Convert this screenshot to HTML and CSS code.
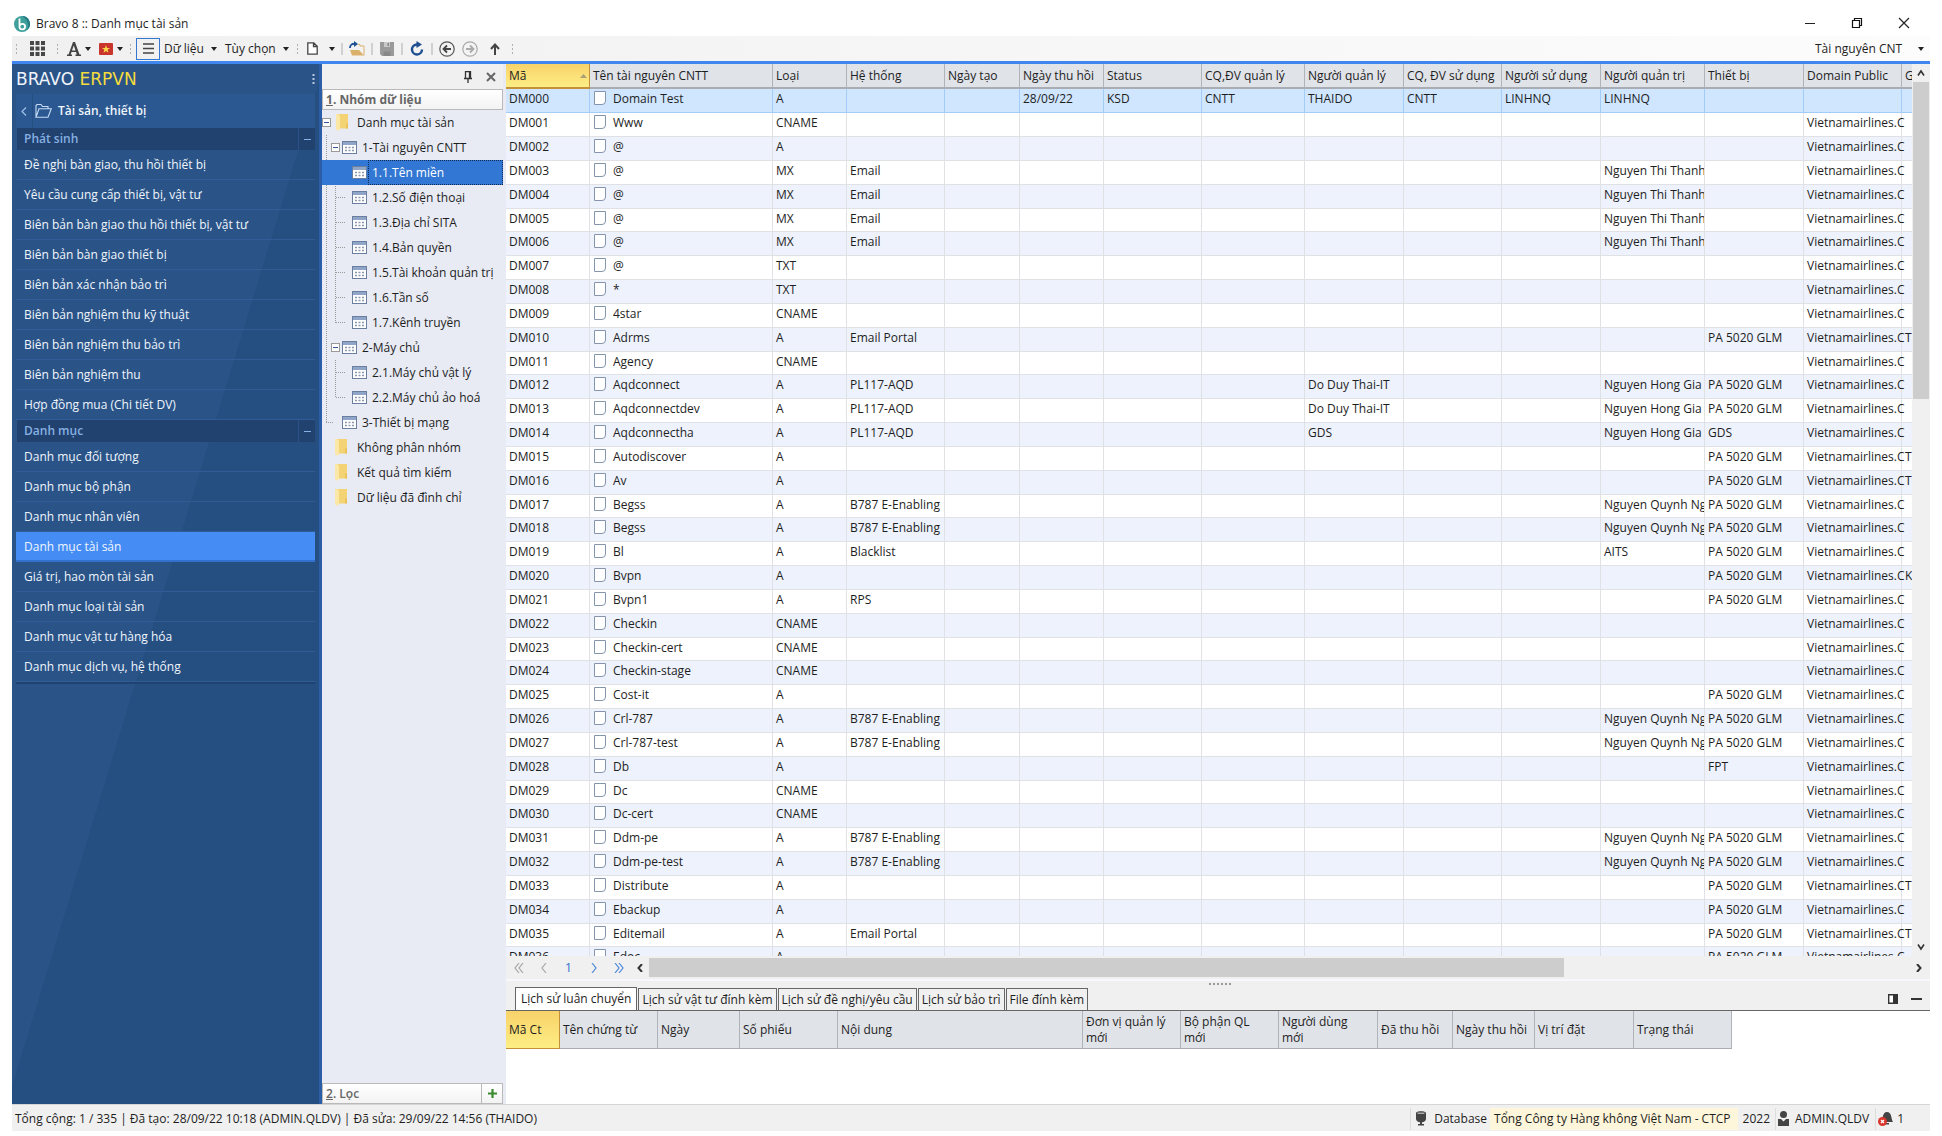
FILE: index.html
```html
<!DOCTYPE html>
<html lang="vi">
<head>
<meta charset="utf-8">
<title>Bravo 8 :: Danh mục tài sản</title>
<link rel="stylesheet" href="styles.css">
</head>
<body>
<svg class="sprite" aria-hidden="true">
  <symbol id="cal" viewBox="0 0 15 13"><rect x=".5" y=".5" width="14" height="12" fill="#fff" stroke="#6a7f9f"/><rect x="1" y="1" width="13" height="3" fill="#8fa6c9"/><path d="M3 6.500h2m1.500 0h2m1.500 0h2M3 9.500h2m1.500 0h2m1.500 0h2" stroke="#8a97ac" stroke-width="1.500"/></symbol>
  <symbol id="folder" viewBox="0 0 13 17"><path d="M2 0h10v14.500H2z" fill="#f3d373"/><path d="M0 0h2.500l1.500 2v13l-1.500 2L0 15z" fill="#fbe7a6"/><path d="M10 9.500h2v5h-2z" fill="#e9c25a"/></symbol>
  <symbol id="caret" viewBox="0 0 6 4"><path d="M0 0h6L3 4z" fill="#222"/></symbol>
</svg>
<div class="window">
  <header class="titlebar">
    <svg class="app-logo" width="16" height="16" viewBox="0 0 16 16"><circle cx="8" cy="8" r="8" fill="#3f9f9b"/><path d="M8 0a8 8 0 0 1 5 14.200C16 9 13 3 8 0z" fill="#267c86"/><path d="M5.500 2.500v8.200a2.800 2.800 0 1 0 2.800-2.900c-1.500 0-2.800 1-2.800 2.600" fill="none" stroke="#fff" stroke-width="1.800"/></svg>
    <h1 class="app-title">Bravo 8 :: Danh mục tài sản</h1>
    <button class="win-btn" aria-label="Thu nhỏ"><svg width="12" height="12"><path d="M1 6.500h10" stroke="#222"/></svg></button>
    <button class="win-btn" aria-label="Khôi phục"><svg width="12" height="12"><path d="M1.500 3.500h7v7h-7zM3.500 3.500v-2h7v7h-2" fill="none" stroke="#111" stroke-width="1.200"/></svg></button>
    <button class="win-btn" aria-label="Đóng"><svg width="12" height="12"><path d="M1 1l10 10M11 1L1 11" stroke="#222" stroke-width="1.200"/></svg></button>
  </header>

  <div class="toolbar" role="toolbar">
    <span class="grip"></span>
    <button class="tool w32" aria-label="Ứng dụng"><svg width="15" height="15"><path d="M0 2h15M0 7.500h15M0 13h15" stroke="#484848" stroke-width="4" stroke-dasharray="4 1.500"/></svg></button>
    <span class="grip"></span>
    <button class="tool w34" aria-label="Phông chữ"><svg width="14" height="14"><path d="M6 0h2l4.500 12.500H14V14H8.500v-1.500h1.300L9 10H4.500l-.8 2.500H5V14H0v-1.500h1.500zM5 8.500h3.500L6.800 3.500z" fill="#444"/></svg><svg class="caret"><use href="#caret"/></svg></button>
    <button class="tool w30" aria-label="Ngôn ngữ"><svg width="14" height="12"><rect width="14" height="12" rx="1" fill="#c9342c"/><path d="M7 2l1 3h3L8.600 6.800l.9 3L7 8 4.500 9.800l.9-3L3 5h3z" fill="#fbd84a"/></svg><svg class="caret"><use href="#caret"/></svg></button>
    <span class="grip"></span>
    <button class="tool boxed" aria-label="Danh sách"><svg width="11" height="11"><path d="M0 1h11M0 5.500h11M0 10h11" stroke="#444" stroke-width="1.600"/></svg></button>
    <button class="tool text">Dữ liệu<svg class="caret"><use href="#caret"/></svg></button>
    <button class="tool text">Tùy chọn<svg class="caret"><use href="#caret"/></svg></button>
    <span class="grip"></span>
    <button class="tool new" aria-label="Thêm mới"><svg width="11" height="13"><path d="M.8.8h6l3.400 3.400v8H.8zM6.500 1v3.500H10" fill="#fff" stroke="#444" stroke-width="1.300"/></svg><svg class="caret"><use href="#caret"/></svg></button>
    <span class="sep"></span>
    <button class="tool w26" aria-label="Mở"><svg width="16" height="15"><path d="M9 3.500h2V5h4v9.500" fill="none" stroke="#d9b06f"/><path d="M1 9h9l5 5.500H3z" fill="#dbb06a"/><path d="M1 7C1 4 3 2.500 6 2.800" fill="none" stroke="#1d4f91" stroke-width="1.800"/><path d="M5 0l4 3-4 3z" fill="#1d4f91"/></svg></button>
    <span class="sep"></span>
    <button class="tool w26" aria-label="Lưu"><svg width="14" height="14"><path d="M0 0h14v14H2l-2-2z" fill="#9a9a9a"/><path d="M4 0h6v5H4z" fill="#c9c9c9"/><path d="M7.500 1h1.500v3H7.500zM3.500 14V9.500h7V14" fill="#888"/></svg></button>
    <span class="sep"></span>
    <button class="tool w26" aria-label="Làm mới"><svg width="14" height="15"><path d="M8 3.500H6.500a5 5 0 1 0 5.500 5" fill="none" stroke="#1d4f91" stroke-width="2.400"/><path d="M6.500 0l5.500 3.500L6.500 7z" fill="#1d4f91"/></svg></button>
    <span class="sep"></span>
    <button class="tool w24 history" aria-label="Quay lại"><svg width="16" height="16"><circle cx="8" cy="8" r="7.200" fill="none" stroke="#555" stroke-width="1.200"/><path d="M12 8H5M8 4.500L4.500 8 8 11.500" fill="none" stroke="#444" stroke-width="1.800"/></svg></button>
    <button class="tool w24" aria-label="Tiếp"><svg width="16" height="16"><circle cx="8" cy="8" r="7.200" fill="none" stroke="#aaa" stroke-width="1.200"/><path d="M4 8h7M8 4.500L11.500 8 8 11.500" fill="none" stroke="#aaa" stroke-width="1.800"/></svg></button>
    <button class="tool w26" aria-label="Lên"><svg width="10" height="12"><path d="M5 12V2M1 6l4-4.500L9 6" fill="none" stroke="#444" stroke-width="2"/></svg></button>
    <span class="grip"></span>
    <label class="view-picker"><select aria-label="Kiểu xem"><option>Tài nguyên CNT</option></select><svg class="caret"><use href="#caret"/></svg></label>
  </div>

  <div class="main">
    <nav class="sidebar">
      <div class="brand"><span>BRAVO <b>ERPVN</b></span><button class="kebab" aria-label="Thêm"><svg width="3" height="11"><path d="M1.500 0v11" stroke="#b9cbe4" stroke-width="2" stroke-dasharray="2 2"/></svg></button></div>
      <div class="module"><button class="back" aria-label="Trở về"><svg width="6" height="9"><path d="M5 .5L1 4.500l4 4" fill="none" stroke="#9fc0ea" stroke-width="1.200"/></svg></button><svg class="module-icon" width="17" height="14"><path d="M1 12.500V1.500l1-1h4l1.500 2H13v2M1 13.200L4 4.700h12.300L13 13.200z" fill="none" stroke="#c6daf5" stroke-width="1.100"/></svg><strong>Tài sản, thiết bị</strong></div>
      <h2 class="section"><span>Phát sinh</span><button aria-label="Thu gọn Phát sinh"></button></h2>
      <ul class="menu">
        <li><a href="#">Đề nghị bàn giao, thu hồi thiết bị</a></li>
        <li><a href="#">Yêu cầu cung cấp thiết bị, vật tư</a></li>
        <li><a href="#">Biên bản bàn giao thu hồi thiết bị, vật tư</a></li>
        <li><a href="#">Biên bản bàn giao thiết bị</a></li>
        <li><a href="#">Biên bản xác nhận bảo trì</a></li>
        <li><a href="#">Biên bản nghiệm thu kỹ thuật</a></li>
        <li><a href="#">Biên bản nghiệm thu bảo trì</a></li>
        <li><a href="#">Biên bản nghiệm thu</a></li>
        <li><a href="#">Hợp đồng mua (Chi tiết DV)</a></li>
      </ul>
      <h2 class="section"><span>Danh mục</span><button aria-label="Thu gọn Danh mục"></button></h2>
      <ul class="menu last">
        <li><a href="#">Danh mục đối tượng</a></li>
        <li><a href="#">Danh mục bộ phận</a></li>
        <li><a href="#">Danh mục nhân viên</a></li>
        <li><a href="#" class="active">Danh mục tài sản</a></li>
        <li><a href="#">Giá trị, hao mòn tài sản</a></li>
        <li><a href="#">Danh mục loại tài sản</a></li>
        <li><a href="#">Danh mục vật tư hàng hóa</a></li>
        <li><a href="#">Danh mục dịch vụ, hệ thống</a></li>
      </ul>
    </nav>

    <aside class="groups">
      <div class="pane-tools">
        <button aria-label="Ghim"><svg width="8" height="12"><path d="M1.500 7V.7h5V7M0 7.500h8M4 7.500V12M5.500 1v6" fill="none" stroke="#333" stroke-width="1.300"/></svg></button>
        <button aria-label="Đóng khung"><svg width="10" height="10"><path d="M1 1l8 8M9 1L1 9" stroke="#666" stroke-width="2"/></svg></button>
      </div>
      <h2 class="pane-head"><span><u>1</u>. Nhóm dữ liệu</span></h2>
      <ul class="tree">
        <li><div class="node root"><button class="toggle" aria-label="Thu gọn"></button><svg class="folder"><use href="#folder"/></svg><span>Danh mục tài sản</span></div>
          <ul class="level1">
            <li><div class="node"><button class="toggle" aria-label="Thu gọn"></button><svg class="cal"><use href="#cal"/></svg><span>1-Tài nguyên CNTT</span></div>
              <ul class="level2">
                <li class="node selected"><svg class="cal"><use href="#cal"/></svg><span>1.1.Tên miền</span></li>
                <li class="node"><svg class="cal"><use href="#cal"/></svg><span>1.2.Số điện thoại</span></li>
                <li class="node"><svg class="cal"><use href="#cal"/></svg><span>1.3.Địa chỉ SITA</span></li>
                <li class="node"><svg class="cal"><use href="#cal"/></svg><span>1.4.Bản quyền</span></li>
                <li class="node"><svg class="cal"><use href="#cal"/></svg><span>1.5.Tài khoản quản trị</span></li>
                <li class="node"><svg class="cal"><use href="#cal"/></svg><span>1.6.Tần số</span></li>
                <li class="node"><svg class="cal"><use href="#cal"/></svg><span>1.7.Kênh truyền</span></li>
              </ul></li>
            <li><div class="node"><button class="toggle" aria-label="Thu gọn"></button><svg class="cal"><use href="#cal"/></svg><span>2-Máy chủ</span></div>
              <ul class="level2">
                <li class="node"><svg class="cal"><use href="#cal"/></svg><span>2.1.Máy chủ vật lý</span></li>
                <li class="node"><svg class="cal"><use href="#cal"/></svg><span>2.2.Máy chủ ảo hoá</span></li>
              </ul></li>
            <li><div class="node leaf"><svg class="cal"><use href="#cal"/></svg><span>3-Thiết bị mạng</span></div></li>
          </ul></li>
        <li class="node plain"><svg class="folder"><use href="#folder"/></svg><span>Không phân nhóm</span></li>
        <li class="node plain"><svg class="folder"><use href="#folder"/></svg><span>Kết quả tìm kiếm</span></li>
        <li class="node plain"><svg class="folder"><use href="#folder"/></svg><span>Dữ liệu đã đình chỉ</span></li>
      </ul>
      <h2 class="pane-head filter"><span><u>2</u>. Lọc</span><button aria-label="Thêm bộ lọc"><svg width="9" height="9"><path d="M4.500 0v9M0 4.500h9" stroke="#3c8a2e" stroke-width="2.200"/></svg></button></h2>
    </aside>

    <section class="content">
      <div class="grid-area">
        <div class="grid-view">
          <table class="grid">
            <colgroup><col class="c84"><col class="c183"><col class="c74"><col class="c98"><col class="c75"><col class="c84"><col class="c98"><col class="c103"><col class="c99"><col class="c98"><col class="c99"><col class="c104"><col class="c99"><col class="c98"><col class="c98"></colgroup>
            <thead><tr><th class="sorted"><div>Mã<svg width="7" height="4"><path d="M0 4h7L3.500 0z" fill="#a8a078"/></svg></div><th>Tên tài nguyên CNTT<th>Loại<th>Hệ thống<th>Ngày tạo<th>Ngày thu hồi<th>Status<th>CQ,ĐV quản lý<th>Người quản lý<th>CQ, ĐV sử dụng<th>Người sử dụng<th>Người quản trị<th>Thiết bị<th>Domain Public<th>G</thead>
            <tbody>
<tr class="current"><td>DM000<td>Domain Test<td>A<td><td><td>28/09/22<td>KSD<td>CNTT<td>THAIDO<td>CNTT<td>LINHNQ<td>LINHNQ<td><td><td>
<tr><td>DM001<td>Www<td>CNAME<td><td><td><td><td><td><td><td><td><td><td>Vietnamairlines.C<td>
<tr><td>DM002<td>@<td>A<td><td><td><td><td><td><td><td><td><td><td>Vietnamairlines.C<td>
<tr><td>DM003<td>@<td>MX<td>Email<td><td><td><td><td><td><td><td>Nguyen Thi Thanh<td><td>Vietnamairlines.C<td>
<tr><td>DM004<td>@<td>MX<td>Email<td><td><td><td><td><td><td><td>Nguyen Thi Thanh<td><td>Vietnamairlines.C<td>
<tr><td>DM005<td>@<td>MX<td>Email<td><td><td><td><td><td><td><td>Nguyen Thi Thanh<td><td>Vietnamairlines.C<td>
<tr><td>DM006<td>@<td>MX<td>Email<td><td><td><td><td><td><td><td>Nguyen Thi Thanh<td><td>Vietnamairlines.C<td>
<tr><td>DM007<td>@<td>TXT<td><td><td><td><td><td><td><td><td><td><td>Vietnamairlines.C<td>
<tr><td>DM008<td>*<td>TXT<td><td><td><td><td><td><td><td><td><td><td>Vietnamairlines.C<td>
<tr><td>DM009<td>4star<td>CNAME<td><td><td><td><td><td><td><td><td><td><td>Vietnamairlines.C<td>
<tr><td>DM010<td>Adrms<td>A<td>Email Portal<td><td><td><td><td><td><td><td><td>PA 5020 GLM<td>Vietnamairlines.C<td>T
<tr><td>DM011<td>Agency<td>CNAME<td><td><td><td><td><td><td><td><td><td><td>Vietnamairlines.C<td>
<tr><td>DM012<td>Aqdconnect<td>A<td>PL117-AQD<td><td><td><td><td>Do Duy Thai-IT<td><td><td>Nguyen Hong Gia<td>PA 5020 GLM<td>Vietnamairlines.C<td>
<tr><td>DM013<td>Aqdconnectdev<td>A<td>PL117-AQD<td><td><td><td><td>Do Duy Thai-IT<td><td><td>Nguyen Hong Gia<td>PA 5020 GLM<td>Vietnamairlines.C<td>
<tr><td>DM014<td>Aqdconnectha<td>A<td>PL117-AQD<td><td><td><td><td>GDS<td><td><td>Nguyen Hong Gia<td>GDS<td>Vietnamairlines.C<td>
<tr><td>DM015<td>Autodiscover<td>A<td><td><td><td><td><td><td><td><td><td>PA 5020 GLM<td>Vietnamairlines.C<td>T
<tr><td>DM016<td>Av<td>A<td><td><td><td><td><td><td><td><td><td>PA 5020 GLM<td>Vietnamairlines.C<td>T
<tr><td>DM017<td>Begss<td>A<td>B787 E-Enabling<td><td><td><td><td><td><td><td>Nguyen Quynh Ng<td>PA 5020 GLM<td>Vietnamairlines.C<td>
<tr><td>DM018<td>Begss<td>A<td>B787 E-Enabling<td><td><td><td><td><td><td><td>Nguyen Quynh Ng<td>PA 5020 GLM<td>Vietnamairlines.C<td>
<tr><td>DM019<td>Bl<td>A<td>Blacklist<td><td><td><td><td><td><td><td>AITS<td>PA 5020 GLM<td>Vietnamairlines.C<td>
<tr><td>DM020<td>Bvpn<td>A<td><td><td><td><td><td><td><td><td><td>PA 5020 GLM<td>Vietnamairlines.C<td>K
<tr><td>DM021<td>Bvpn1<td>A<td>RPS<td><td><td><td><td><td><td><td><td>PA 5020 GLM<td>Vietnamairlines.C<td>
<tr><td>DM022<td>Checkin<td>CNAME<td><td><td><td><td><td><td><td><td><td><td>Vietnamairlines.C<td>
<tr><td>DM023<td>Checkin-cert<td>CNAME<td><td><td><td><td><td><td><td><td><td><td>Vietnamairlines.C<td>
<tr><td>DM024<td>Checkin-stage<td>CNAME<td><td><td><td><td><td><td><td><td><td><td>Vietnamairlines.C<td>
<tr><td>DM025<td>Cost-it<td>A<td><td><td><td><td><td><td><td><td><td>PA 5020 GLM<td>Vietnamairlines.C<td>
<tr><td>DM026<td>Crl-787<td>A<td>B787 E-Enabling<td><td><td><td><td><td><td><td>Nguyen Quynh Ng<td>PA 5020 GLM<td>Vietnamairlines.C<td>
<tr><td>DM027<td>Crl-787-test<td>A<td>B787 E-Enabling<td><td><td><td><td><td><td><td>Nguyen Quynh Ng<td>PA 5020 GLM<td>Vietnamairlines.C<td>
<tr><td>DM028<td>Db<td>A<td><td><td><td><td><td><td><td><td><td>FPT<td>Vietnamairlines.C<td>
<tr><td>DM029<td>Dc<td>CNAME<td><td><td><td><td><td><td><td><td><td><td>Vietnamairlines.C<td>
<tr><td>DM030<td>Dc-cert<td>CNAME<td><td><td><td><td><td><td><td><td><td><td>Vietnamairlines.C<td>
<tr><td>DM031<td>Ddm-pe<td>A<td>B787 E-Enabling<td><td><td><td><td><td><td><td>Nguyen Quynh Ng<td>PA 5020 GLM<td>Vietnamairlines.C<td>
<tr><td>DM032<td>Ddm-pe-test<td>A<td>B787 E-Enabling<td><td><td><td><td><td><td><td>Nguyen Quynh Ng<td>PA 5020 GLM<td>Vietnamairlines.C<td>
<tr><td>DM033<td>Distribute<td>A<td><td><td><td><td><td><td><td><td><td>PA 5020 GLM<td>Vietnamairlines.C<td>T
<tr><td>DM034<td>Ebackup<td>A<td><td><td><td><td><td><td><td><td><td>PA 5020 GLM<td>Vietnamairlines.C<td>
<tr><td>DM035<td>Editemail<td>A<td>Email Portal<td><td><td><td><td><td><td><td><td>PA 5020 GLM<td>Vietnamairlines.C<td>T
<tr><td>DM036<td>Edoc<td>A<td><td><td><td><td><td><td><td><td><td>PA 5020 GLM<td>Vietnamairlines.C<td>
            </tbody>
          </table>
        </div>
        <div class="vscroll">
          <button aria-label="Cuộn lên"><svg width="8" height="8"><path d="M1 6.500L4 2l3 4.500" fill="none" stroke="#333" stroke-width="1.600"/></svg></button>
          <div class="vthumb"></div>
          <button class="end" aria-label="Cuộn xuống"><svg width="8" height="8"><path d="M1 1.500L4 6l3-4.500" fill="none" stroke="#333" stroke-width="1.600"/></svg></button>
        </div>
      </div>
      <div class="pager">
        <button aria-label="Trang đầu"><svg width="10" height="10"><path d="M5 0L1 5l4 5M9 0L5 5l4 5" fill="none" stroke="#a5a5a5" stroke-width="1.200"/></svg></button>
        <button aria-label="Trang trước"><svg width="6" height="10"><path d="M5 0L1 5l4 5" fill="none" stroke="#a5a5a5" stroke-width="1.200"/></svg></button>
        <button class="page">1</button>
        <button aria-label="Trang sau"><svg width="6" height="10"><path d="M1 0l4 5-4 5" fill="none" stroke="#4a86d8" stroke-width="1.200"/></svg></button>
        <button aria-label="Trang cuối"><svg width="10" height="10"><path d="M1 0l4 5-4 5M5 0l4 5-4 5" fill="none" stroke="#4a86d8" stroke-width="1.200"/></svg></button>
        <button class="arrow" aria-label="Cuộn trái"><svg width="6" height="8"><path d="M5 0L1.500 4 5 8" fill="none" stroke="#333" stroke-width="2"/></svg></button>
        <div class="hthumb"></div><div class="hrest"></div>
        <button class="arrow" aria-label="Cuộn phải"><svg width="6" height="8"><path d="M1 0l3.500 4L1 8" fill="none" stroke="#333" stroke-width="2"/></svg></button>
      </div>
      <div class="splitter"><span></span></div>
      <div class="tabs" role="tablist">
        <button role="tab" class="tab on" aria-selected="true">Lịch sử luân chuyển</button>
        <button role="tab" class="tab">Lịch sử vật tư đính kèm</button>
        <button role="tab" class="tab">Lịch sử đề nghị/yêu cầu</button>
        <button role="tab" class="tab">Lịch sử bảo trì</button>
        <button role="tab" class="tab">File đính kèm</button>
        <div class="tab-tools">
          <button aria-label="Bố cục"><svg width="10" height="10"><path d="M.7.7h8.600v8.600H.7z" fill="#fff" stroke="#333" stroke-width="1.400"/><path d="M5 0h5v10H5z" fill="#333"/></svg></button>
          <button aria-label="Thu nhỏ khung"><svg width="11" height="10"><path d="M0 5h11" stroke="#333" stroke-width="2"/></svg></button>
        </div>
      </div>
      <div class="detail-view">
        <table class="detail">
          <colgroup><col class="c54"><col class="c98"><col class="c82"><col class="c98"><col class="c245"><col class="c98"><col class="c98"><col class="c99"><col class="c75"><col class="c82"><col class="c99"><col class="c98"></colgroup>
          <thead><tr><th class="sorted">Mã Ct<th>Tên chứng từ<th>Ngày<th>Số phiếu<th>Nội dung<th>Đơn vị quản lý<br>mới<th>Bộ phận QL<br>mới<th>Người dùng<br>mới<th>Đã thu hồi<th>Ngày thu hồi<th>Vị trí đặt<th>Trạng thái</thead>
        </table>
      </div>
    </section>
  </div>

  <footer class="status">
    <span class="summary">Tổng cộng: 1 / 335 | Đã tạo: 28/09/22 10:18 (ADMIN.QLDV) | Đã sửa: 29/09/22 14:56 (THAIDO)</span>
    <span class="cell"><svg width="10" height="15"><path d="M0 2C0-.5 10-.5 10 2v6c0 2-2 3-4 3.300V13h2v1.500H2V13h2v-1.700C2 11 0 10 0 8z" fill="#444"/><path d="M1.500 2.200h7" stroke="#ddd"/></svg>Database</span>
    <span class="company">Tổng Công ty Hàng không Việt Nam - CTCP</span>
    <span class="year">2022</span>
    <span class="cell user"><svg width="11" height="15"><circle cx="5.500" cy="3.500" r="3.500" fill="#444"/><path d="M0 15V8h3l2.500 2.500L8 8h3v7z" fill="#444"/></svg>ADMIN.QLDV</span>
    <span class="cell bell"><svg width="15" height="15"><path d="M3 11C5 9 4 1 9 1s4 7 6 10zM7 12h4v1.500H7z" fill="#444"/><circle cx="4.500" cy="10.500" r="4.500" fill="#d9352b"/><path d="M3 9l3 3M6 9l-3 3" stroke="#fff" stroke-width="1.300"/></svg>1</span>
  </footer>
</div>
</body>
</html>
```
FILE: styles.css
```css
* { box-sizing: border-box; }
body { margin: 0; background: #fff; color: #1e1e1e; font: 12px/16px "Open Sans", "Noto Sans", sans-serif; }
button { border: 0; padding: 0; background: none; color: inherit; font: inherit; display: flex; align-items: center; justify-content: center; }
ul { list-style: none; margin: 0; padding: 0; }
h1, h2 { margin: 0; font: inherit; }
a { color: inherit; text-decoration: none; }
svg { flex: none; display: block; }
.sprite { display: none; }

.window { height: 100vh; padding: 0 12px 5px; display: flex; flex-direction: column; }

/* title bar */
.titlebar { height: 36px; padding: 12px 3px 0 2px; display: flex; align-items: center; flex: none; }
.app-title { flex: 1; margin-left: 6px; }
.win-btn { width: 47px; height: 24px; padding-bottom: 3px; }

/* toolbar */
.toolbar { height: 28px; flex: none; display: flex; align-items: center; background: linear-gradient(90deg, #f0f0f0, #fcfcfc); border-bottom: 3px solid #3f87ee; }
.tool { height: 22px; gap: 4px; }
.w24 { width: 23px; }
.w26 { width: 26px; }
.w30 { width: 30px; }
.w32 { width: 32px; }
.w34 { width: 34px; }
.boxed { width: 24px; margin-left: 1px; border: 1px solid #3478d0; }
.text { gap: 7px; padding: 0 4px; }
.new { gap: 11px; width: 38px; }
.history { margin-left: 2px; }
.caret { width: 6px; height: 4px; }
.grip { width: 9px; height: 12px; background: radial-gradient(circle, #b0b0b0 1px, transparent 1px) center / 9px 4px; }
.sep { width: 2px; height: 12px; margin: 0 1px; background: #d0d0d0; }
.view-picker { margin-left: auto; display: flex; align-items: center; gap: 8px; padding-right: 6px; }
.view-picker select { appearance: none; border: 0; padding: 0; width: 95px; background: none; font: inherit; color: inherit; }

.main { flex: 1; min-height: 0; display: flex; border-bottom: 1px solid #d6d6d6; }

/* navigation */
.sidebar { width: 310px; flex: none; padding: 0 3px 0 4px; color: #f0f5fc; border-right: 3px solid #2b5ea6; background: linear-gradient(107deg, #2a5488 50%, #254e81 50%); }
.brand { height: 30px; display: flex; align-items: center; justify-content: space-between; font: 17px/20px "DejaVu Sans", sans-serif; }
.brand b { color: #f4dc3c; font-weight: 400; }
.kebab { width: 5px; height: 16px; }
.module { height: 34px; margin-right: 1px; display: flex; align-items: center; background: #2b5890; }
.module strong { font-weight: 600; }
.back { width: 17px; height: 34px; border-right: 1px solid #254e81; }
.module-icon { margin: 0 6px 0 2px; }
.section { height: 22px; margin: 0 1px; display: flex; background: #21416f; color: #86b0e2; font-weight: 600; line-height: 21px; }
.section span { flex: 1; padding-left: 7px; }
.section button { width: 17px; border-left: 1px solid #2a5189; }
.section button::before { content: ""; width: 7px; height: 1px; background: #86b0e2; }
.menu a { display: block; height: 30px; margin-right: 1px; padding: 7px 8px 6px; border-bottom: 1px solid #305c98; }
.menu .active { background: #458df5; border-bottom: 2px solid #3272cf; }
.menu.last { border-bottom: 2px solid #1f4270; margin-right: 1px; }
.menu.last a { margin-right: 0; }

/* group tree */
.groups { width: 184px; flex: none; display: flex; flex-direction: column; padding-right: 3px; background: #e8ebf4; }
.pane-tools { height: 25px; padding-right: 7px; display: flex; align-items: center; justify-content: flex-end; gap: 14px; background: #f0f0f0; }
.pane-head { height: 21px; display: flex; border: 1px solid #b9b9b9; background: linear-gradient(#fff, #f3f3f3); color: #666; font-weight: 700; line-height: 19px; }
.pane-head span { flex: 1; padding-left: 3px; }
.filter { margin-top: auto; font-weight: 600; }
.filter button { width: 21px; border-left: 1px solid #b9b9b9; }
.node { height: 25px; display: flex; align-items: center; gap: 5px; white-space: nowrap; }
.toggle { width: 9px; height: 9px; border: 1px solid #999; background: #fff; }
.toggle::before { content: ""; width: 5px; height: 1px; background: #33579a; }
.folder { width: 13px; height: 17px; }
.cal { width: 15px; height: 13px; }
.root .folder { margin-right: 3px; }
.plain { padding-left: 13px; gap: 9px; }
.level1 { background: repeating-linear-gradient(#999 0 1px, transparent 1px 2px) 4px 0 / 1px calc(100% - 12px) no-repeat; }
.level1 div.node { padding-left: 9px; gap: 5px; }
.level1 div.node .toggle { margin-right: -3px; }
.level1 div.leaf { padding-left: 20px; background: repeating-linear-gradient(90deg, #999 0 1px, transparent 1px 2px) 4px 12px / 8px 1px no-repeat; }
.level2 { background: repeating-linear-gradient(#999 0 1px, transparent 1px 2px) 13px 0 / 1px calc(100% - 12px) no-repeat; }
.level2 .node { padding-left: 30px; background: repeating-linear-gradient(90deg, #999 0 1px, transparent 1px 2px) 14px 12px / 9px 1px no-repeat; }
.level2 .node.selected { gap: 1px; background: #3277d3; color: #fff; }
.level2 .selected span { flex: 1; padding: 4px 3px; border: 1px dotted #0d2a55; height: 25px; }

/* data grid */
.content { flex: 1; min-width: 0; display: flex; flex-direction: column; }
.grid-area { flex: 1; min-height: 0; display: flex; }
.grid-view { flex: 1; min-width: 0; overflow: hidden; }
table { table-layout: fixed; width: 0; border-collapse: separate; border-spacing: 0; }
.c54 { width: 54px; } .c74 { width: 74px; } .c75 { width: 75px; } .c82 { width: 82px; } .c84 { width: 84px; }
.c98 { width: 98px; } .c99 { width: 99px; } .c103 { width: 103px; } .c104 { width: 104px; } .c183 { width: 183px; } .c245 { width: 245px; }
th { padding: 0 0 0 3px; text-align: left; font-weight: 400; white-space: nowrap; overflow: hidden; background: #e0e3e8; border-right: 1px solid #b0b4ba; border-bottom: 1px solid #a9adb3; }
th.sorted { background: linear-gradient(#f8d26a, #fdee84); border-color: #c49038; }
.grid th { height: 25px; border-bottom-width: 2px; }
.sorted div { display: flex; align-items: center; justify-content: space-between; padding-right: 2px; }
td { height: 24px; padding: 0 0 3px 3px; white-space: nowrap; overflow: hidden; border-right: 1px solid #e0e1e5; border-bottom: 1px solid #e0e1e5; }
tr:nth-child(6n) td { height: 23px; }
tbody tr:nth-child(odd) { background: #edf2fc; }
tbody tr:nth-child(even) { background: #fff; }
tbody tr.current { background: #d0e6fe; }
.current td { border-color: #a3cdf8; }
td:nth-child(14) { overflow: visible; }
td:nth-child(2)::before { content: ""; display: inline-block; width: 10px; height: 12px; margin: 0 7px 0 1px; vertical-align: -2px; border: 1px solid #8595ad; border-bottom-right-radius: 4px; background: #fff; }
.vscroll { width: 18px; flex: none; padding: 0 1px; background: #f0f0f0; display: flex; flex-direction: column; }
.vscroll button { height: 18px; }
.vthumb { height: 317px; background: #cdcdcd; }
.vscroll .end { margin-top: auto; }

.pager { height: 23px; flex: none; padding: 2px 2px 2px 0; display: flex; background: #f0f0f0; }
.pager button { width: 25px; }
.pager .page { color: #2f6fd0; }
.pager .arrow { width: 18px; }
.hthumb { flex: 726 1 0; background: #cdcdcd; }
.hrest { flex: 274 1 0; }
.splitter { height: 8px; flex: none; display: flex; justify-content: center; padding-left: 6px; background: #f0f0f0; border-top: 2px solid #f8f8fc; }
.splitter span { width: 24px; height: 2px; margin-top: 2px; background: repeating-linear-gradient(90deg, #999 0 2px, transparent 2px 4px); }

/* detail pane */
.tabs { height: 24px; flex: none; display: flex; align-items: flex-end; gap: 1px; padding-left: 9px; background: #f0f0f0; border-bottom: 1px solid #666; }
.tab { height: 22px; padding: 0 3px; border: 1px solid #666; border-bottom: 0; white-space: nowrap; }
.tab.on { height: 23px; padding: 0 5px; background: #fff; }
.tab-tools { margin: 0 8px 0 auto; display: flex; gap: 13px; height: 22px; }
.detail-view { height: 93px; flex: none; overflow: hidden; }
.detail th { height: 38px; }

/* status bar */
.status { height: 26px; flex: none; display: flex; align-items: center; padding: 1px 26px 0 3px; background: #f0f0f0; }
.summary { flex: 1; }
.cell { height: 22px; display: flex; align-items: center; gap: 8px; padding: 0 3px 0 5px; border-left: 1px solid #dcdcdc; }
.company { height: 22px; line-height: 22px; padding: 0 7px 0 4px; background: #fdf6da; }
.year { padding: 0 5px; }
.user { gap: 6px; padding: 0 6px 0 2px; }
.bell { gap: 4px; padding: 0 0 0 2px; }
```
